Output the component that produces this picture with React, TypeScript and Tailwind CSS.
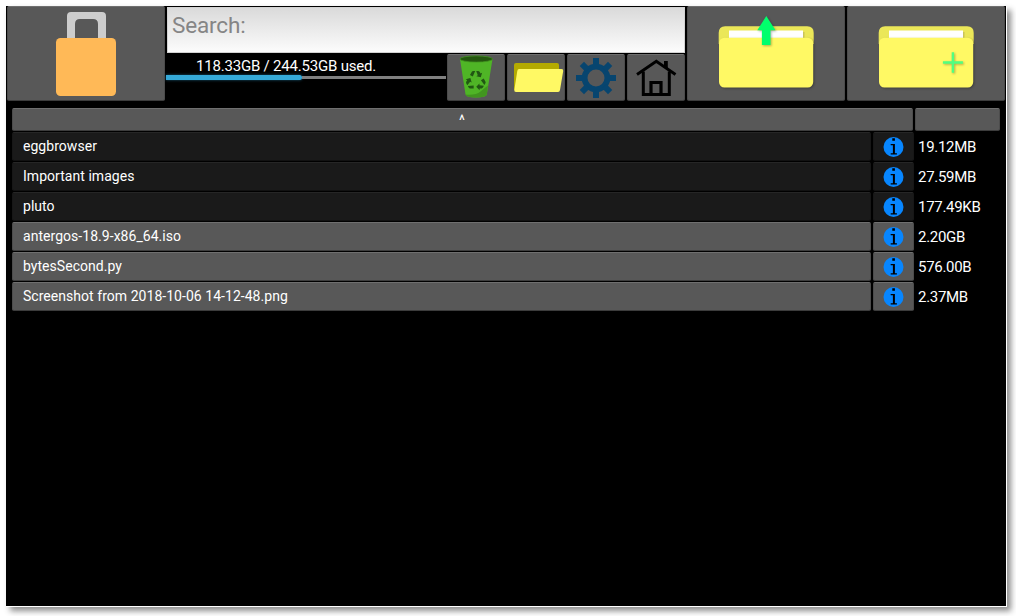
import React from "react";

const raised =
  "box-border rounded-[2px] border border-t-[#6f6f6f] border-x-[#4c4c4c] border-b-[#3c3c3c] bg-[#585858]";
const sunken =
  "box-border rounded-[2px] border border-t-[#262626] border-x-[#171717] border-b-[#111111] bg-[#1a1a1a]";

function LockIcon() {
  return (
    <svg className="block h-full w-full" viewBox="7 6 158 95">
      <path
        fillRule="evenodd"
        fill="#cdcdcd"
        d="M67 40V16q0-4 4-4h31q4 0 4 4v24zM75 40h23V24q0-5-5-5H80q-5 0-5 5z"
      />
      <rect x="56" y="38" width="60" height="58" rx="4.5" fill="#ffb957" />
    </svg>
  );
}

function TrashIcon() {
  return (
    <svg className="block h-full w-full" viewBox="447 54 58 47">
      <path d="M460 59l5.500 35.500q.4 3 10.500 3t10.800-3L492.500 59z" fill="#4fb526" />
      <path d="M465.500 94.500q10 1 15-3t7.400-6l-1.100 9q-.8 3-10.800 3t-10.500-3z" fill="#41951f" />
      <ellipse cx="476.200" cy="59" rx="16.300" ry="3.100" fill="#24560f" stroke="#41951f" strokeWidth=".8" />
      <g fill="#215713">
        {[0, 120, 240].map((a) => (
          <path
            key={a}
            transform={`translate(475.800 80.700) rotate(${a})`}
            d="M-5.800-5.800L-4-8.900Q-3.500-9.600-2.600-9.600L-.6-9.600-3-4.200zM.4-9.600H2.400Q3.300-9.600 3.800-8.900L4.800-7.200 6.300-8 5-3.400.5-4.500 2-5.400z"
          />
        ))}
      </g>
    </svg>
  );
}

function OpenFolderIcon() {
  return (
    <svg className="block h-full w-full" viewBox="507 54 58 47">
      <path d="M514 90V65q0-2 2-2h41q2 0 2 2v15z" fill="#b4aa00" />
      <path d="M519 69h42.500q2 0 1.700 2l-3.200 19q-.3 2-2 2h-42q-2 0-1.700-2l3-19q.3-2 1.700-2z" fill="#fff964" />
    </svg>
  );
}

function GearIcon() {
  return (
    <svg className="block h-full w-full" viewBox="567 54 58 47">
      <circle cx="596" cy="78" r="11.400" fill="none" stroke="#07456f" strokeWidth="5.800" />
      <g fill="#07456f">
        {[0, 45, 90, 135, 180, 225, 270, 315].map((a) => (
          <rect key={a} x="593" y="58" width="6" height="8" transform={`rotate(${a} 596 78)`} />
        ))}
      </g>
    </svg>
  );
}

function HouseIcon() {
  return (
    <svg className="block h-full w-full" viewBox="627 54 58 47">
      <g fill="none" stroke="#000">
        <path d="M637 74.500L656.300 61.200L675.500 74.500" strokeWidth="2.900" />
        <path d="M643.300 71.500V94.400H669.300V71.500" strokeWidth="3" />
        <path d="M651 94V82.500H661V94" strokeWidth="3.200" />
        <path d="M665.900 61V68" strokeWidth="3.800" />
      </g>
    </svg>
  );
}

function Folder() {
  return (
    <g>
      <path d="M718.700 44V33q0-6.700 6.500-6.700h82q6.500 0 6.500 6.700v11z" fill="#ebe758" />
      <path d="M803 32h1.500v6H803z" fill="#c9c45a" />
      <path d="M729 30.500h74v8h-74z" fill="#fff" />
      <rect x="719" y="37.700" width="94.200" height="49.800" rx="5.500" fill="#fff964" className="drop-shadow-[1px_1px_1px_rgba(0,0,0,0.3)]" />
    </g>
  );
}

function UpFolderIcon() {
  return (
    <svg className="block h-full w-full" viewBox="687 6 158 95">
      <Folder />
      <path
        d="M766.300 16l9.200 14.300h-5V45h-8.600V30.300h-4.600z"
        fill="#00ff6c"
        className="drop-shadow-[1px_1px_1px_rgba(0,0,0,0.3)]"
      />
    </svg>
  );
}

function NewFolderIcon() {
  return (
    <svg className="block h-full w-full" viewBox="687 6 158 95">
      <Folder />
      <path
        d="M782.900 62.500h20M792.900 52.300v20.500"
        stroke="#50ff80"
        strokeWidth="2.400"
        className="drop-shadow-[1px_1px_1px_rgba(0,0,0,0.3)]"
      />
    </svg>
  );
}

function InfoIcon() {
  return (
    <svg className="block h-[21px] w-[21px]" viewBox="0 0 21 21">
      <circle cx="10.500" cy="10" r="10" fill="#0786ff" />
      <path d="M9.300 1.300h2.600v2.400H9.300zM7.700 7H11.900v9.300h2v1.200H7.700v-1.200H9.900V8.200H7.700z" fill="#000" />
    </svg>
  );
}

const files = [
  { name: "eggbrowser", size: "19.12MB", folder: true },
  { name: "Important images", size: "27.59MB", folder: true },
  { name: "pluto", size: "177.49KB", folder: true },
  { name: "antergos-18.9-x86_64.iso", size: "2.20GB", folder: false },
  { name: "bytesSecond.py", size: "576.00B", folder: false },
  { name: "Screenshot from 2018-10-06 14-12-48.png", size: "2.37MB", folder: false },
];

export default function App() {
  return (
    <div className="h-[616px] w-[1016px] overflow-hidden bg-white p-1.5 font-['Roboto',sans-serif] text-white">
      <div className="h-[601px] w-[1001px] border-r border-b border-white bg-black shadow-[4px_4px_6px_0px_rgba(0,0,0,0.45)]">
        <header className="flex h-[95px] gap-0.5 pl-px">
          <button className={`${raised} w-[158px] p-0`}>
            <div className="-m-px h-[95px] w-[158px]"><LockIcon /></div>
          </button>
          <div className="flex w-[518px] flex-col">
            <input
              aria-label="Search"
              placeholder="Search:"
              className="mt-px h-[46px] w-full border border-[#d2d2d2] bg-linear-to-b from-[#dadada] to-[#fcfcfc] px-1 pb-[11px] text-[22.5px] tracking-[-0.15px] outline-none placeholder:text-[#858585]"
            />
            <div className="mt-px flex h-[47px] gap-0.5">
              <div className="-mr-px -ml-px w-[280px] shrink-0">
                <div className="h-[21px] pl-[30px] text-[15px] leading-[25px] tracking-[-0.2px] whitespace-nowrap">
                  118.33GB / 244.53GB used.
                </div>
                <div className="flex h-[5px] items-center">
                  <div className="h-[5px] w-[136px] rounded-r-sm bg-[#35a9d8] shadow-[0_0_3px_#1b5c78]" />
                  <div className="h-[3px] flex-1 bg-[#808080]" />
                </div>
              </div>
              {[TrashIcon, OpenFolderIcon, GearIcon, HouseIcon].map((Icon, i) => (
                <button key={i} className={`${raised} w-[58px] shrink-0 p-0`}>
                  <div className="-m-px h-[47px] w-[58px]"><Icon /></div>
                </button>
              ))}
            </div>
          </div>
          <button className={`${raised} w-[158px] p-0`}>
            <div className="-m-px h-[95px] w-[158px]"><UpFolderIcon /></div>
          </button>
          <button className={`${raised} w-[158px] p-0`}>
            <div className="-m-px h-[95px] w-[158px]"><NewFolderIcon /></div>
          </button>
        </header>
        <main className="pt-[7px] pl-1.5">
          <div className="flex gap-0.5">
            <button className={`${raised} h-[23px] w-[901px] pr-px text-[14px] leading-[23px]`}>^</button>
            <button className={`${raised} h-[23px] w-[85px]`} />
          </div>
          <div className="mt-px flex flex-col gap-px">
            {files.map((f) => (
              <div key={f.name} className="flex h-[29px] gap-0.5">
                <button
                  className={`${f.folder ? sunken : raised} w-[859px] pl-2.5 text-left text-[14px] leading-[27px] tracking-[0.04px]`}
                >
                  {f.name}
                </button>
                <button className={`${f.folder ? sunken : raised} flex w-[41px] items-center justify-center pt-0.5`}>
                  <InfoIcon />
                </button>
                <span className="pl-0.5 text-[15px] leading-[30px] tracking-[-0.3px]">{f.size}</span>
              </div>
            ))}
          </div>
        </main>
      </div>
    </div>
  );
}
